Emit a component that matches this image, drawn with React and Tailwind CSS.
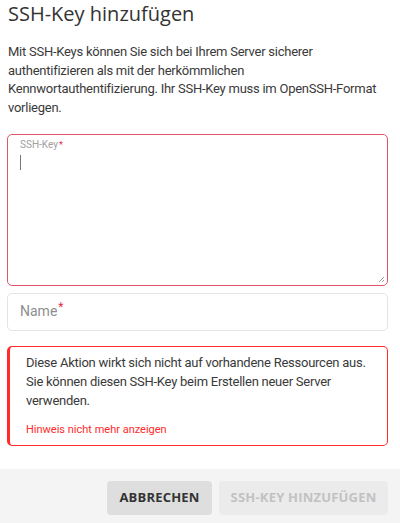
import React from "react";

export default function App() {
  return (
    <div className="relative w-[400px] h-[523px] bg-white overflow-hidden flex flex-col" style={{ fontFamily: "Roboto, 'Noto Sans', sans-serif" }}>
      <span className="absolute right-[6px] top-[-11px] text-[16px] leading-[16px] text-[#b5b5b5]">×</span>
      <h1 className="pl-[8px] pr-[12px] text-[20px] leading-[28px] text-[#333] font-normal" style={{ fontFamily: "'Open Sans', sans-serif" }}>
        SSH-Key hinzufügen
      </h1>
      <p className="mt-[15px] pl-[8px] pr-[4px] text-[13px] leading-[18.7px] tracking-[-0.25px] text-[#3a3a3a]">
        Mit SSH-Keys können Sie sich bei Ihrem Server sicherer authentifizieren als mit der herkömmlichen Kennwortauthentifizierung. Ihr SSH-Key muss im OpenSSH-Format vorliegen.
      </p>
      <div className="mt-[16px] ml-[7px] mr-[12px] h-[152px] border border-[#e2566c] rounded-[5px] px-[12px] pt-[3px] relative">
        <div className="text-[10px] leading-[14px] text-[#a0a0a0]">
          SSH-Key<span className="text-[#e0304a] align-top text-[9px] ml-[1px]">*</span>
        </div>
        <div className="mt-[3px] w-[1px] h-[15px] bg-[#777]"></div>
        <svg className="absolute right-[2px] bottom-[2px]" width="7" height="7" viewBox="0 0 7 7">
          <path d="M1 6 L6 1 M4 6 L6 4" stroke="#9a9a9a" strokeWidth="1" />
        </svg>
      </div>
      <div className="mt-[7px] ml-[7px] mr-[12px] h-[38px] border border-[#e4e4e4] rounded-[5px] px-[12px] flex items-center">
        <span className="text-[14px] text-[#8e8e8e]">
          Name<span className="text-[#e0304a] align-top text-[12px] leading-[12px] ml-[1px]">*</span>
        </span>
      </div>
      <div className="mt-[15px] ml-[7px] mr-[12px] h-[100px] border border-[#ff2b2b] border-l-[3px] rounded-[5px] pl-[16px] pr-[10px] pt-[6px]">
        <p className="text-[13px] leading-[19px] tracking-[-0.25px] text-[#3a3a3a]">
          Diese Aktion wirkt sich nicht auf vorhandene Ressourcen aus. Sie können diesen SSH-Key beim Erstellen neuer Server verwenden.
        </p>
        <div className="mt-[12px] text-[11px] leading-[16px] text-[#ff2b2b]">Hinweis nicht mehr anzeigen</div>
      </div>
      <div className="mt-auto h-[54px] bg-[#f4f4f4] flex justify-end items-start pt-[12px] pr-[12px] gap-[7px]" style={{ fontFamily: "'Open Sans', sans-serif" }}>
        <button className="w-[105px] h-[34px] rounded-[4px] bg-[#dedede] text-[13px] font-bold text-[#333] tracking-[0.2px]">
          ABBRECHEN
        </button>
        <button className="w-[169px] h-[34px] rounded-[4px] bg-[#ebebeb] text-[13px] font-bold text-[#c2c2c2] tracking-[0.2px]">
          SSH-KEY HINZUFÜGEN
        </button>
      </div>
    </div>
  );
}
